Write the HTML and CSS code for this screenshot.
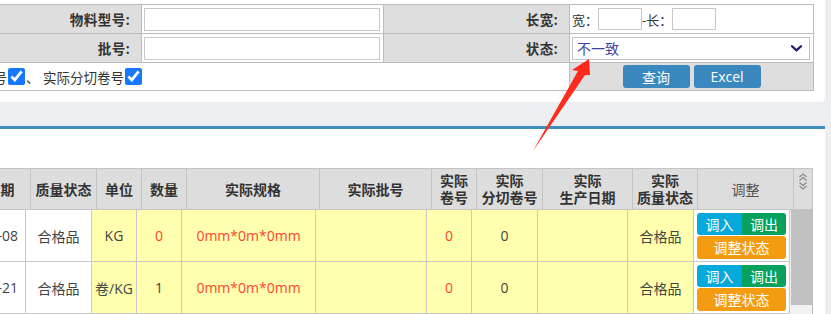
FILE: index.html
```html
<!DOCTYPE html>
<html lang="zh-CN">
<head>
<meta charset="utf-8">
<title>库存调整</title>
<link rel="stylesheet" href="styles.css">
</head>
<body>
<div class="top-panel">
  <div class="search">
    <div class="cell label">物料型号:</div>
    <div class="cell field"><input class="text" type="text"></div>
    <div class="cell label">长宽:</div>
    <div class="cell field size">宽：<input class="small" type="text">-长：<input class="small" type="text"></div>

    <div class="cell label">批号:</div>
    <div class="cell field"><input class="text" type="text"></div>
    <div class="cell label">状态:</div>
    <div class="cell field">
      <div class="select"><span>不一致</span>
        <svg class="chev" width="11" height="7" viewBox="0 0 11 7"><path d="M1 1.2 L5.5 5.4 L10 1.2" fill="none" stroke="#1c1c6e" stroke-width="2.2" stroke-linecap="round" stroke-linejoin="round"/></svg>
      </div>
    </div>

    <div class="cell opts">实际卷号<input class="cb" type="checkbox" checked>、 实际分切卷号<input class="cb" type="checkbox" checked></div>
    <div class="cell actions"><button class="btn">查询</button><button class="btn">Excel</button></div>
  </div>
</div>

<div class="list-panel">
  <div class="thead">
    <div class="th">生产日期</div>
    <div class="th">质量状态</div>
    <div class="th">单位</div>
    <div class="th">数量</div>
    <div class="th">实际规格</div>
    <div class="th">实际批号</div>
    <div class="th">实际<br>卷号</div>
    <div class="th">实际<br>分切卷号</div>
    <div class="th">实际<br>生产日期</div>
    <div class="th">实际<br>质量状态</div>
    <div class="th th-light">调整</div>
    <div class="th th-icon">
      <svg width="10" height="19" viewBox="0 0 10 19"><path d="M1.5 5 L5 2 L8.5 5 M1.5 8.5 L5 5.5 L8.5 8.5 M1.5 10.5 L5 13.5 L8.5 10.5 M1.5 14 L5 17 L8.5 14" fill="none" stroke="#8a8a8a" stroke-width="1.2"/></svg>
    </div>
  </div>
  <div class="tbody">
    <div class="rows">
      <div class="td">2023-02-08</div>
      <div class="td">合格品</div>
      <div class="td y">KG</div>
      <div class="td y red">0</div>
      <div class="td y red">0mm*0m*0mm</div>
      <div class="td y"></div>
      <div class="td y red">0</div>
      <div class="td y">0</div>
      <div class="td y"></div>
      <div class="td y">合格品</div>
      <div class="td ops">
        <div class="btn-group"><button class="op in">调入</button><button class="op out">调出</button><button class="op state">调整状态</button></div>
      </div>

      <div class="td">2023-01-21</div>
      <div class="td">合格品</div>
      <div class="td y">卷/KG</div>
      <div class="td y">1</div>
      <div class="td y red">0mm*0m*0mm</div>
      <div class="td y"></div>
      <div class="td y red">0</div>
      <div class="td y">0</div>
      <div class="td y"></div>
      <div class="td y">合格品</div>
      <div class="td ops">
        <div class="btn-group"><button class="op in">调入</button><button class="op out">调出</button><button class="op state">调整状态</button></div>
      </div>
    </div>
    <div class="vscroll"><div class="thumb"></div></div>
  </div>
</div>

<svg class="annot" width="831" height="314" viewBox="0 0 831 314">
  <polygon points="533,151 585,75 590,75 589,59 572,70 578,71" fill="#ff2a1c"/>
</svg>
</body>
</html>
```

FILE: styles.css
```css
* { box-sizing: border-box; }
html, body { margin: 0; padding: 0; }
body {
  width: 831px;
  height: 314px;
  overflow: hidden;
  position: relative;
  background: #eceef2;
  font-family: "Open Sans", "Noto Sans CJK SC", sans-serif;
  font-size: 14px;
  color: #333;
}

/* ---------- search panel ---------- */
.top-panel {
  width: 825px;
  height: 102px;
  background: #fff;
  padding-top: 4px;
  overflow: hidden;
  border-radius: 0 0 4px 0;
  margin-bottom: 24px;
}
.search {
  display: grid;
  grid-template-columns: 193px 242px 186px 244px;
  grid-template-rows: 29px 29px 28px;
  width: 865px;
  margin-left: -51px;
  border-top: 1px solid #bcbcbc;
}
.cell {
  display: flex;
  align-items: center;
  border-right: 1px solid #bcbcbc;
  border-bottom: 1px solid #bcbcbc;
  white-space: nowrap;
}
.label {
  justify-content: flex-end;
  background: #dedede;
  padding-right: 11px;
  font-size: 13.5px;
  font-weight: bold;
  letter-spacing: 0.5px;
  color: #333;
}
.field { padding-left: 2px; background: #fff; }
.text {
  width: 236px;
  height: 23px;
  margin: 0;
  padding: 0 4px;
  border: 1px solid #c8c8c8;
  background: #fff;
}
.size { font-size: 13px; }
.small {
  width: 44px;
  height: 22px;
  margin: 0;
  border: 1px solid #c8c8c8;
  background: #fff;
}
.select {
  width: 238px;
  height: 23px;
  display: flex;
  align-items: center;
  justify-content: space-between;
  padding: 0 7px 0 4px;
  border: 1px solid #c4c4c4;
  color: #3f3fa0;
  font-size: 14px;
}
.chev { display: block; }
.opts {
  grid-column: 1 / 4;
  padding-left: 4px;
  font-size: 13.5px;
  color: #333;
}
.cb {
  width: 17px;
  height: 17px;
  margin: 0 1px;
  accent-color: #1677ff;
}
.actions {
  justify-content: center;
  gap: 4px;
  background: #dedede;
}
.btn {
  width: 67px;
  height: 23px;
  padding: 0;
  border: 0;
  border-radius: 3px;
  background: #3b88bf;
  color: #fff;
  font: 14px "Open Sans", "Noto Sans CJK SC", sans-serif;
}

/* ---------- list panel ---------- */
.list-panel {
  width: 825px;
  height: 188px;
  background: #fff;
  border-top: 3px solid #3c8dbc;
  padding-top: 39px;
  overflow: hidden;
}
.thead {
  display: grid;
  grid-template-columns: 88px 66px 45px 45px 133px 112px 45px 66px 90px 65px 96px 20px;
  width: 871px;
  height: 42px;
  margin-left: -58px;
  background: #dddddd;
  border-top: 1px solid #c4c4c4;
  border-bottom: 1px solid #c4c4c4;
}
.th {
  display: flex;
  align-items: center;
  justify-content: center;
  text-align: center;
  border-left: 1px solid #c4c4c4;
  font-weight: bold;
  line-height: 17px;
  color: #333;
  white-space: nowrap;
}
.th-light { font-weight: normal; color: #555; }
.th-icon {
  align-items: flex-start;
  padding-top: 3px;
  border-right: 1px solid #c4c4c4;
}
.tbody { display: flex; }
.rows {
  flex: none;
  display: grid;
  grid-template-columns: 88px 66px 45px 45px 134px 111px 45px 66px 90px 66px 96px;
  grid-auto-rows: 52px;
  width: 852px;
  margin-left: -63px;
}
.td {
  display: flex;
  align-items: center;
  justify-content: center;
  border-left: 1px solid #c8c8c8;
  border-bottom: 1px solid #c8c8c8;
  color: #444;
  white-space: nowrap;
}
.y { background: #ffffad; }
.red { color: #ff4433; }
.ops { background: #fff; }
.btn-group {
  width: 89px;
  display: flex;
  flex-wrap: wrap;
  row-gap: 1px;
}
.op {
  height: 22px;
  padding: 0;
  border: 0;
  color: #fff;
  font: 14px "Open Sans", "Noto Sans CJK SC", sans-serif;
}
.in { width: 45px; background: #06a9dc; border-radius: 3px 0 0 3px; }
.out { width: 44px; background: #08a05c; border-radius: 0 3px 3px 0; }
.state { width: 89px; height: 23px; background: #f39c12; border-radius: 3px; }
.vscroll {
  flex: none;
  width: 24px;
  height: 110px;
  padding-left: 1px;
  border-left: 1px solid #c8c8c8;
  border-right: 1px solid #bcbcbc;
  background: #f1f1f1;
}
.thumb { width: 21px; height: 95px; background: #c1c1c1; }

/* ---------- annotation arrow ---------- */
.annot {
  position: absolute;
  left: 0;
  top: 0;
  pointer-events: none;
}
```
